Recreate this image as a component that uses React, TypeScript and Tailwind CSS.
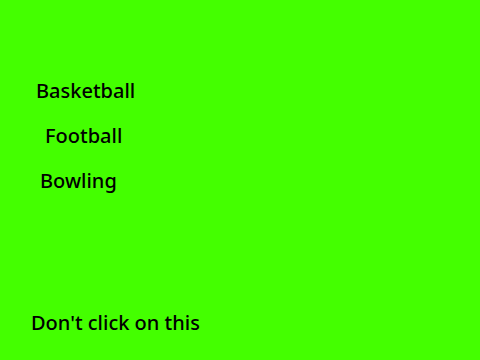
export default function App() {
  return (
    <div className="w-[480px] h-[360px] bg-[#44ff00] text-black text-[20px] leading-[26px] font-medium flex flex-col" style={{ fontFamily: '"Noto Sans", sans-serif' }}>
      <div className="flex flex-col pt-[78px] gap-[19px]">
        <button className="self-start ml-[36px]">Basketball</button>
        <button className="self-start ml-[45px]">Football</button>
        <button className="self-start ml-[40px]">Bowling</button>
      </div>
      <button className="self-start ml-[31px] mt-auto mb-[24px]">Don't click on this</button>
    </div>
  );
}
